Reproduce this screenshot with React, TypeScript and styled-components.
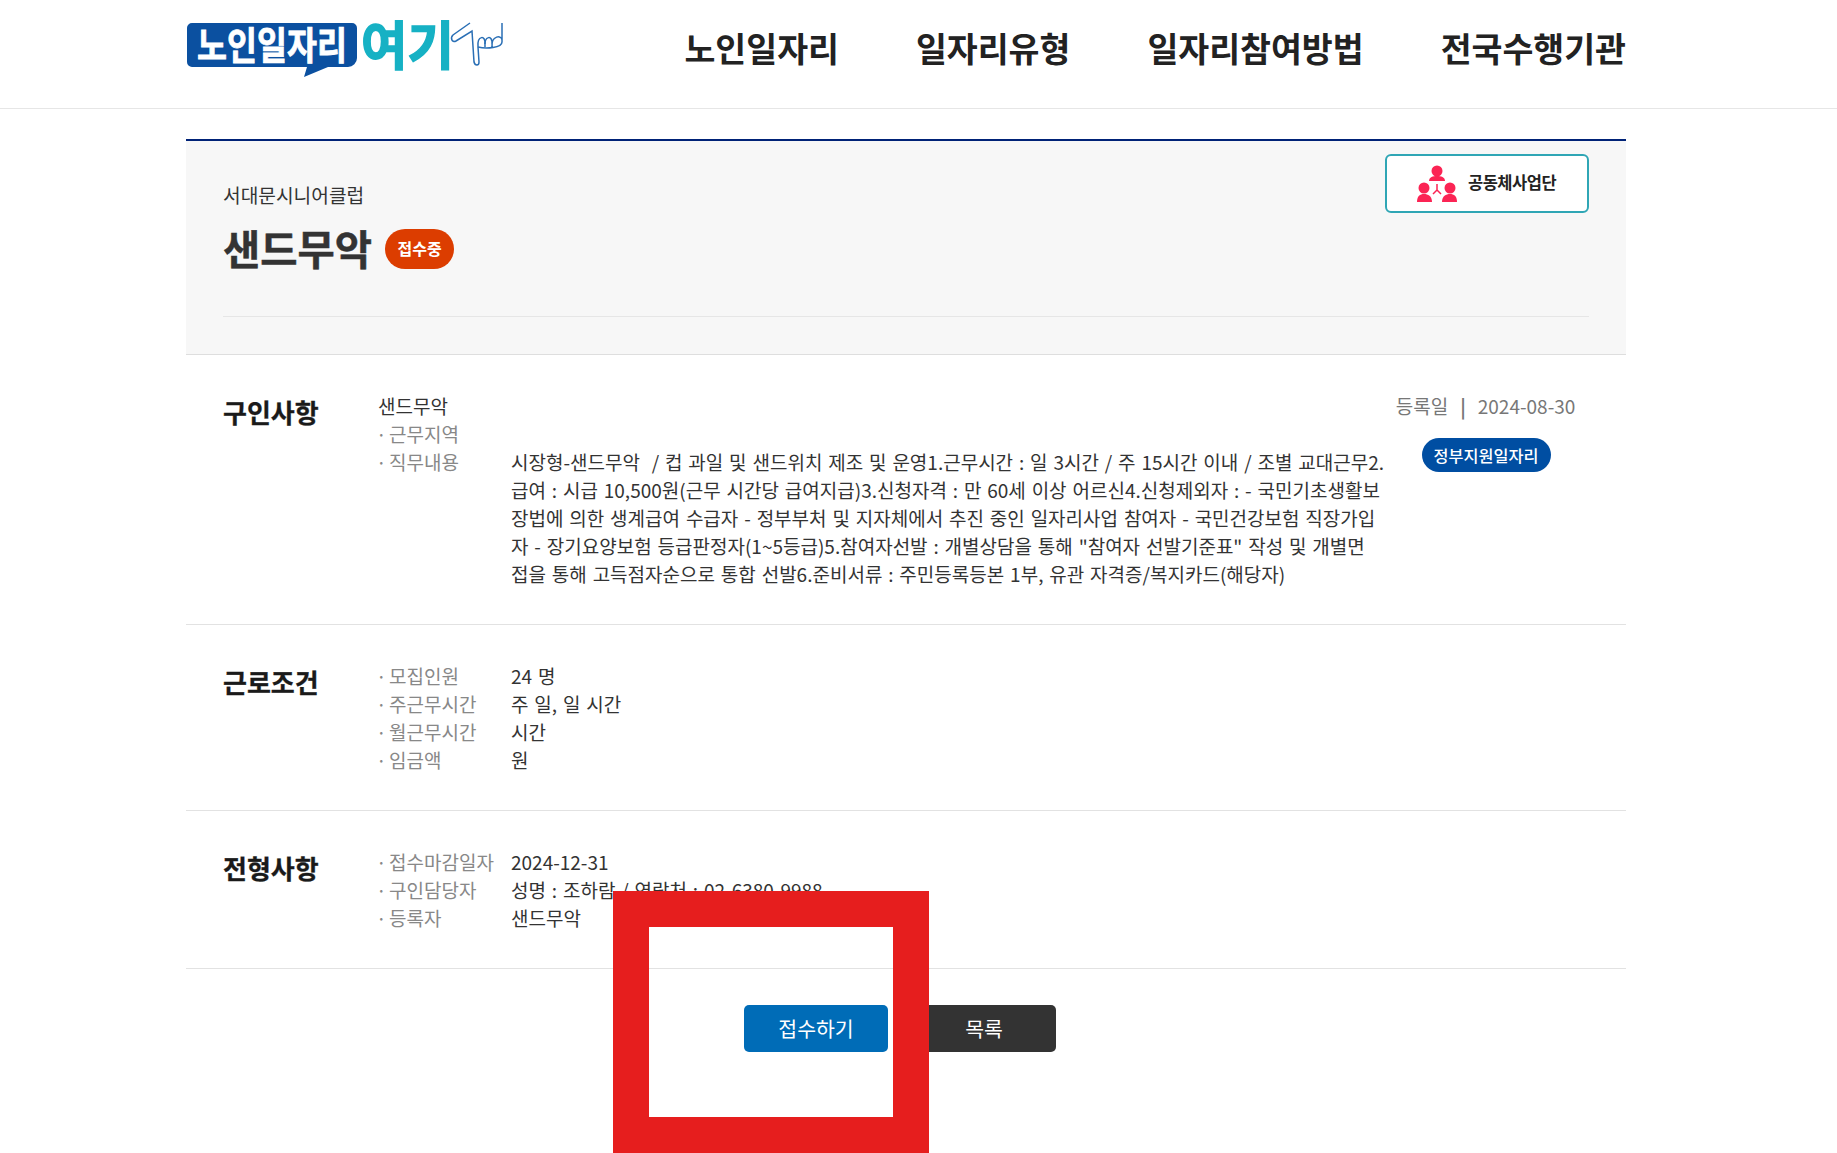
import React from "react";
import styled, { createGlobalStyle } from "styled-components";

const Global = createGlobalStyle`
  html, body { margin: 0; padding: 0; background: #fff; }
  body { font-family: "Noto Sans CJK KR", "Noto Sans", sans-serif; color: #333; }
  * { box-sizing: border-box; }
`;
const Page = styled.div`position: relative; width: 1837px; height: 1153px; overflow: hidden;`;
const Header = styled.header`height: 109px; border-bottom: 1px solid #e6e6e6;`;
const Inner = styled.div`width: 1440px; margin-left: 186px;`;
const HeaderInner = styled(Inner)`display: flex; align-items: flex-start; justify-content: space-between;`;
const LogoBox = styled.a`display: block; width: 320px; height: 100px; svg { display: block; }`;
const Nav = styled.nav`display: flex; gap: 77px; margin-top: 21px;`;
const NavItem = styled.a`font-size: 33.6px; font-weight: 700; line-height: 54px; color: #222; white-space: nowrap;`;
const Detail = styled(Inner)`margin-top: 30px;`;
const Head = styled.div`height: 216px; background: #f7f7f7; border-top: 2px solid #002277; border-bottom: 1px solid #dedede; padding: 13px 37px 0;`;
const HeadTop = styled.div`display: flex; justify-content: space-between; align-items: flex-start; height: 163px; border-bottom: 1px solid #e6e6e6;`;
const Org = styled.div`font-size: 19.2px; line-height: 28px; color: #333; margin-top: 27px;`;
const TitleRow = styled.div`display: flex; align-items: center; gap: 13px; margin-top: 14px;`;
const Title = styled.h1`margin: 0; font-size: 40.5px; line-height: 50px; font-weight: 700; color: #333; -webkit-text-stroke: 0.5px #333;`;
const Status = styled.span`display: flex; align-items: center; justify-content: center; width: 69px; height: 40px; margin-top: 1px; padding: 0 0 2px; border-radius: 20px; background: #dc3d00; color: #fff; font-size: 16px; font-weight: 700;`;
const Community = styled.a`display: flex; align-items: center; gap: 11px; padding-left: 30px; width: 204px; height: 59px; background: #fff; border: 2px solid #2fa6b5; border-radius: 6px; color: #222; font-size: 16.5px; font-weight: 700; letter-spacing: -0.5px;`;
const CommunityLabel = styled.span`padding-bottom: 3px;`;
const Section = styled.section<{ $h: number }>`display: flex; height: ${p => p.$h}px; padding: 37px 37px 0; border-bottom: 1px solid #e2e2e2;`;
const SectionTitle = styled.h2`margin: 0; width: 155px; flex: none; font-size: 26px; line-height: 40px; font-weight: 700; color: #1a1a1a; -webkit-text-stroke: 0.3px #1a1a1a;`;
const Fields = styled.div`width: 1004px; flex: none; font-size: 19px; line-height: 28px; color: #333;`;
const Row = styled.div`display: flex;`;
const Label = styled.span`display: flex; width: 133px; flex: none; color: #888; white-space: nowrap; &::before { content: "·"; width: 13px; margin-left: -2px; flex: none; }`;
const Value = styled.span`flex: 1; white-space: pre-wrap; word-spacing: 1.6px;`;
const DescLine = styled.span`display: block; white-space: pre;`;
const Plain = styled.div``;
const Aside = styled.aside`flex: 1; display: flex; flex-direction: column; align-items: center; font-size: 19px; line-height: 28px; color: #777; white-space: nowrap;`;
const Sep = styled.span`margin: 0 12px; font-weight: 700;`;
const GovBadge = styled.span`display: flex; align-items: center; justify-content: center; width: 129px; height: 34px; margin: 18px 0 0 1px; border-radius: 17px; background: #004ea2; color: #fff; font-size: 16.3px; font-weight: 500;`;
const Buttons = styled.div`display: flex; justify-content: center; gap: 24px; padding: 36px 12px 0 0;`;
const Button = styled.a<{ $bg: string }>`display: flex; align-items: center; justify-content: center; width: 144px; height: 47px; padding-bottom: 2px; border-radius: 5px; background: ${p => p.$bg}; color: #fff; font-size: 20.5px;`;
const Overlay = styled.div`position: absolute; left: 613px; top: 891px; width: 316px; height: 262px; border: 36px solid #e61e1e;`;
const SvgText = styled.text`font-family: "Noto Sans CJK KR", sans-serif; font-weight: 700;`;

const Logo = () => (
  <svg width="320" height="100" viewBox="0 -18 320 100">
    <path d="M6 5H166a5 5 0 0 1 5 5V40a9 9 0 0 1-9 9H142L118 59L121 49H6a5 5 0 0 1-5-5V10a5 5 0 0 1 5-5Z" fill="#0b50a0" />
    <SvgText transform="translate(11 41) scale(0.858 1)" fontSize="38" fill="#fff" stroke="#fff" strokeWidth="0.8">노인일자리</SvgText>
    <SvgText transform="translate(175 47) scale(0.97 1)" fontSize="52" fill="#16b1c4" stroke="#16b1c4" strokeWidth="1.5">여기</SvgText>
    <g fill="none" stroke="#2a6fb5" strokeWidth="1.5">
      <path d="M284 5L267 17C264 20 266 25 270 23L286 13L288 44C289 48 293 48 293 44L292 29C291 17 300 17 299 26" />
      <path d="M299 29C298 17 307 17 306 26M306 29C305 17 316 17 316 22M316 5V24C316 30 300 31 292 29" />
    </g>
  </svg>
);
const People = () => (
  <svg width="40" height="38" viewBox="0 0 40 38" fill="#fb2454">
    <circle cx="20" cy="6" r="5.5" /><path d="M12 16c0-4 4-5 8-5s8 1 8 5Z" />
    <circle cx="7" cy="23" r="5.5" /><path d="M0 37c0-6 3-8 7-8s8 2 8 8Z" />
    <circle cx="33" cy="23" r="5.5" /><path d="M25 37c0-6 4-8 8-8s7 2 7 8Z" />
    <path d="M20 19v6M20 25l-4 4M20 25l4 4" stroke="#fb2454" strokeWidth="1.5" fill="none" />
  </svg>
);

const descLines = [
  `시장형-샌드무악  / 컵 과일 및 샌드위치 제조 및 운영1.근무시간 : 일 3시간 / 주 15시간 이내 / 조별 교대근무2.`,
  `급여 : 시급 10,500원(근무 시간당 급여지급)3.신청자격 : 만 60세 이상 어르신4.신청제외자 : - 국민기초생활보`,
  `장법에 의한 생계급여 수급자 - 정부부처 및 지자체에서 추진 중인 일자리사업 참여자 - 국민건강보험 직장가입`,
  `자 - 장기요양보험 등급판정자(1~5등급)5.참여자선발 : 개별상담을 통해 "참여자 선발기준표" 작성 및 개별면`,
  `접을 통해 고득점자순으로 통합 선발6.준비서류 : 주민등록등본 1부, 유관 자격증/복지카드(해당자)`,
];

export default function App() {
  return (
    <Page>
      <Global />
      <Header>
        <HeaderInner>
          <LogoBox><Logo /></LogoBox>
          <Nav>
            {["노인일자리", "일자리유형", "일자리참여방법", "전국수행기관"].map(t => <NavItem key={t}>{t}</NavItem>)}
          </Nav>
        </HeaderInner>
      </Header>
      <Detail>
        <Head>
          <HeadTop>
            <div>
              <Org>서대문시니어클럽</Org>
              <TitleRow><Title>샌드무악</Title><Status>접수중</Status></TitleRow>
            </div>
            <Community><People /><CommunityLabel>공동체사업단</CommunityLabel></Community>
          </HeadTop>
        </Head>
        <Section $h={270}>
          <SectionTitle>구인사항</SectionTitle>
          <Fields>
            <Plain>샌드무악</Plain>
            <Row><Label>근무지역</Label><Value /></Row>
            <Row><Label>직무내용</Label><Value>{descLines.map(l => <DescLine key={l}>{l}</DescLine>)}</Value></Row>
          </Fields>
          <Aside>
            <div>등록일<Sep>|</Sep>2024-08-30</div>
            <GovBadge>정부지원일자리</GovBadge>
          </Aside>
        </Section>
        <Section $h={186}>
          <SectionTitle>근로조건</SectionTitle>
          <Fields>
            <Row><Label>모집인원</Label><Value>24 명</Value></Row>
            <Row><Label>주근무시간</Label><Value>주 일, 일 시간</Value></Row>
            <Row><Label>월근무시간</Label><Value>시간</Value></Row>
            <Row><Label>임금액</Label><Value>원</Value></Row>
          </Fields>
        </Section>
        <Section $h={158}>
          <SectionTitle>전형사항</SectionTitle>
          <Fields>
            <Row><Label>접수마감일자</Label><Value>2024-12-31</Value></Row>
            <Row><Label>구인담당자</Label><Value>성명 : 조하람 / 연락처 : 02-6380-9988</Value></Row>
            <Row><Label>등록자</Label><Value>샌드무악</Value></Row>
          </Fields>
        </Section>
        <Buttons>
          <Button $bg="#006cb7">접수하기</Button>
          <Button $bg="#333333">목록</Button>
        </Buttons>
      </Detail>
      <Overlay />
    </Page>
  );
}
